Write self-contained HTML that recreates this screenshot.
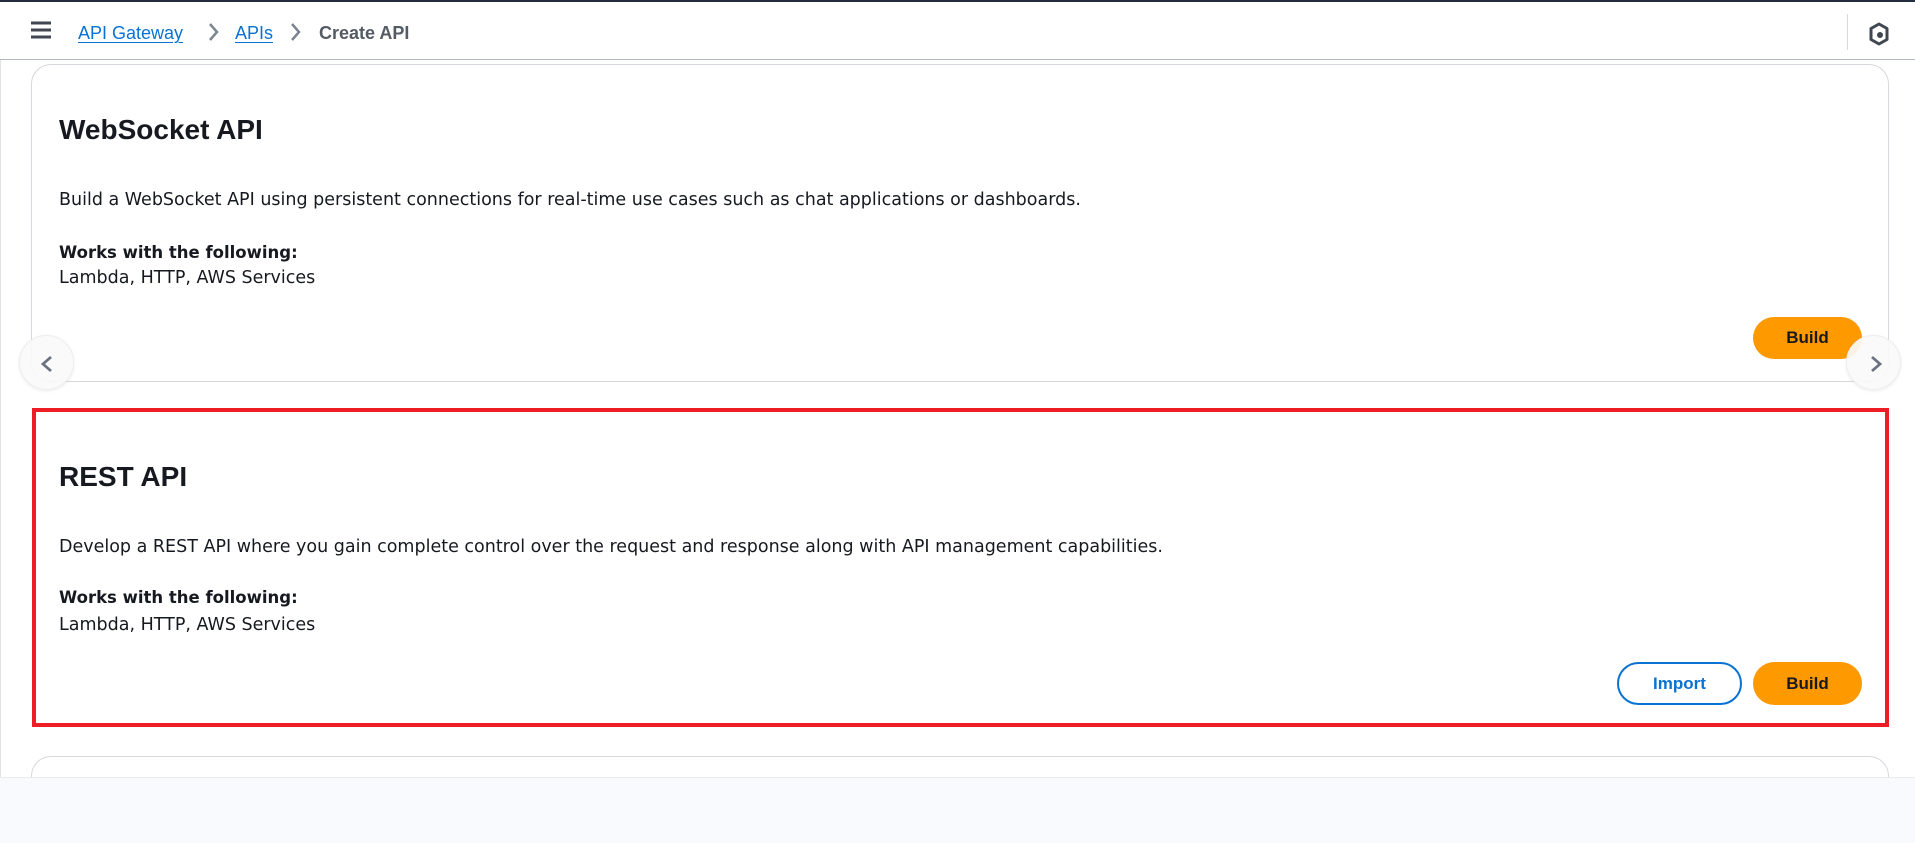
<!DOCTYPE html>
<html><head><meta charset="utf-8"><style>
*{box-sizing:border-box;margin:0;padding:0}
html,body{width:1915px;height:843px;overflow:hidden}
body{background:#fff;font-family:"Liberation Sans",sans-serif;color:#16191f;position:relative}
.top{position:absolute;left:0;top:0;width:1915px;height:2px;background:#232f3e}
.hdr{position:absolute;left:0;top:2px;width:1915px;height:58px;border-bottom:1px solid #b4b8bf;background:#fff}
.lline{position:absolute;left:0;top:60px;width:1px;height:720px;background:#e0e2e6}
.bc{position:absolute;top:20px;font-size:18px;line-height:22px}
.bc a{color:#0972d3;text-decoration:underline;text-underline-offset:3px}
.card{position:absolute;background:#fff;border:1px solid #d5d8dc;border-radius:20px}
.t{position:absolute;left:59px;font-size:28px;font-weight:bold}
.p{position:absolute;left:59px;font-family:"DejaVu Sans",sans-serif;font-size:17.5px;color:#16191f}
.w{font-size:16.5px;font-weight:bold}
.b{position:absolute;font-size:17px;font-weight:bold;border-radius:22px;text-align:center}
.build{background:#ff9900;color:#16191f}
.imp{border:2px solid #0972d3;color:#0972d3}
.circ{position:absolute;width:55px;height:55px;border-radius:50%;background:rgba(250,250,250,0.92);border:1px solid #eee;box-shadow:0 1px 3px rgba(0,0,0,.08)}
</style></head><body>
<div class="top"></div>
<div class="hdr">
<svg style="position:absolute;left:30px;top:19px" width="22" height="18"><g stroke="#414750" stroke-width="3"><line x1="1" y1="2" x2="21" y2="2"/><line x1="1" y1="9" x2="21" y2="9"/><line x1="1" y1="16" x2="21" y2="16"/></g></svg>
<div class="bc" style="left:78px"><a>API Gateway</a></div>
<svg style="position:absolute;left:208px;top:20px" width="12" height="20"><path d="M2 2l7 8-7 8" fill="none" stroke="#7d8590" stroke-width="2.5"/></svg>
<div class="bc" style="left:235px"><a>APIs</a></div>
<svg style="position:absolute;left:290px;top:20px" width="12" height="20"><path d="M2 2l7 8-7 8" fill="none" stroke="#7d8590" stroke-width="2.5"/></svg>
<div class="bc" style="left:319px;color:#545b64;font-weight:bold">Create API</div>
<div style="position:absolute;left:1847px;top:12px;width:1px;height:36px;background:#d5d8dc"></div>
<svg style="position:absolute;left:1868px;top:20px" width="22" height="24" viewBox="0 0 22 24"><path d="M11 2l8 4.5v11L11 22l-8-4.5v-11z" fill="none" stroke="#414750" stroke-width="3" stroke-linejoin="round"/><circle cx="12" cy="13" r="3" fill="#414750"/></svg>
</div>
<div class="lline"></div>

<div class="card" style="left:31px;top:64px;width:1858px;height:318px"></div>
<div class="t" style="top:114px">WebSocket API</div>
<div class="p" style="top:190px">Build a WebSocket API using persistent connections for real-time use cases such as chat applications or dashboards.</div>
<div class="p w" style="top:243px">Works with the following:</div>
<div class="p" style="top:268px">Lambda, HTTP, AWS Services</div>
<div class="b build" style="left:1753px;top:317px;width:109px;height:42px;line-height:42px">Build</div>
<div class="circ" style="left:19px;top:335px"><svg style="position:absolute;left:20px;top:19px" width="14" height="18"><path d="M11 2L3 9l8 7" fill="none" stroke="#6b7280" stroke-width="2.8"/></svg></div>
<div class="circ" style="left:1846px;top:335px"><svg style="position:absolute;left:22px;top:19px" width="14" height="18"><path d="M3 2l8 7-8 7" fill="none" stroke="#6b7280" stroke-width="2.8"/></svg></div>

<div class="card" style="left:31px;top:756px;width:1858px;height:80px"></div>
<div style="position:absolute;left:0;top:777px;width:1915px;height:66px;background:#f9fafd;border-top:1px solid #e9ebed"></div>

<div style="position:absolute;left:32px;top:408px;width:1857px;height:319px;border:4px solid #ee1c25;background:#fff"></div>
<div class="t" style="top:461px">REST API</div>
<div class="p" style="top:537px">Develop a REST API where you gain complete control over the request and response along with API management capabilities.</div>
<div class="p w" style="top:588px">Works with the following:</div>
<div class="p" style="top:615px">Lambda, HTTP, AWS Services</div>
<div class="b imp" style="left:1617px;top:662px;width:125px;height:43px;line-height:39px">Import</div>
<div class="b build" style="left:1753px;top:662px;width:109px;height:43px;line-height:43px">Build</div>
</body></html>
